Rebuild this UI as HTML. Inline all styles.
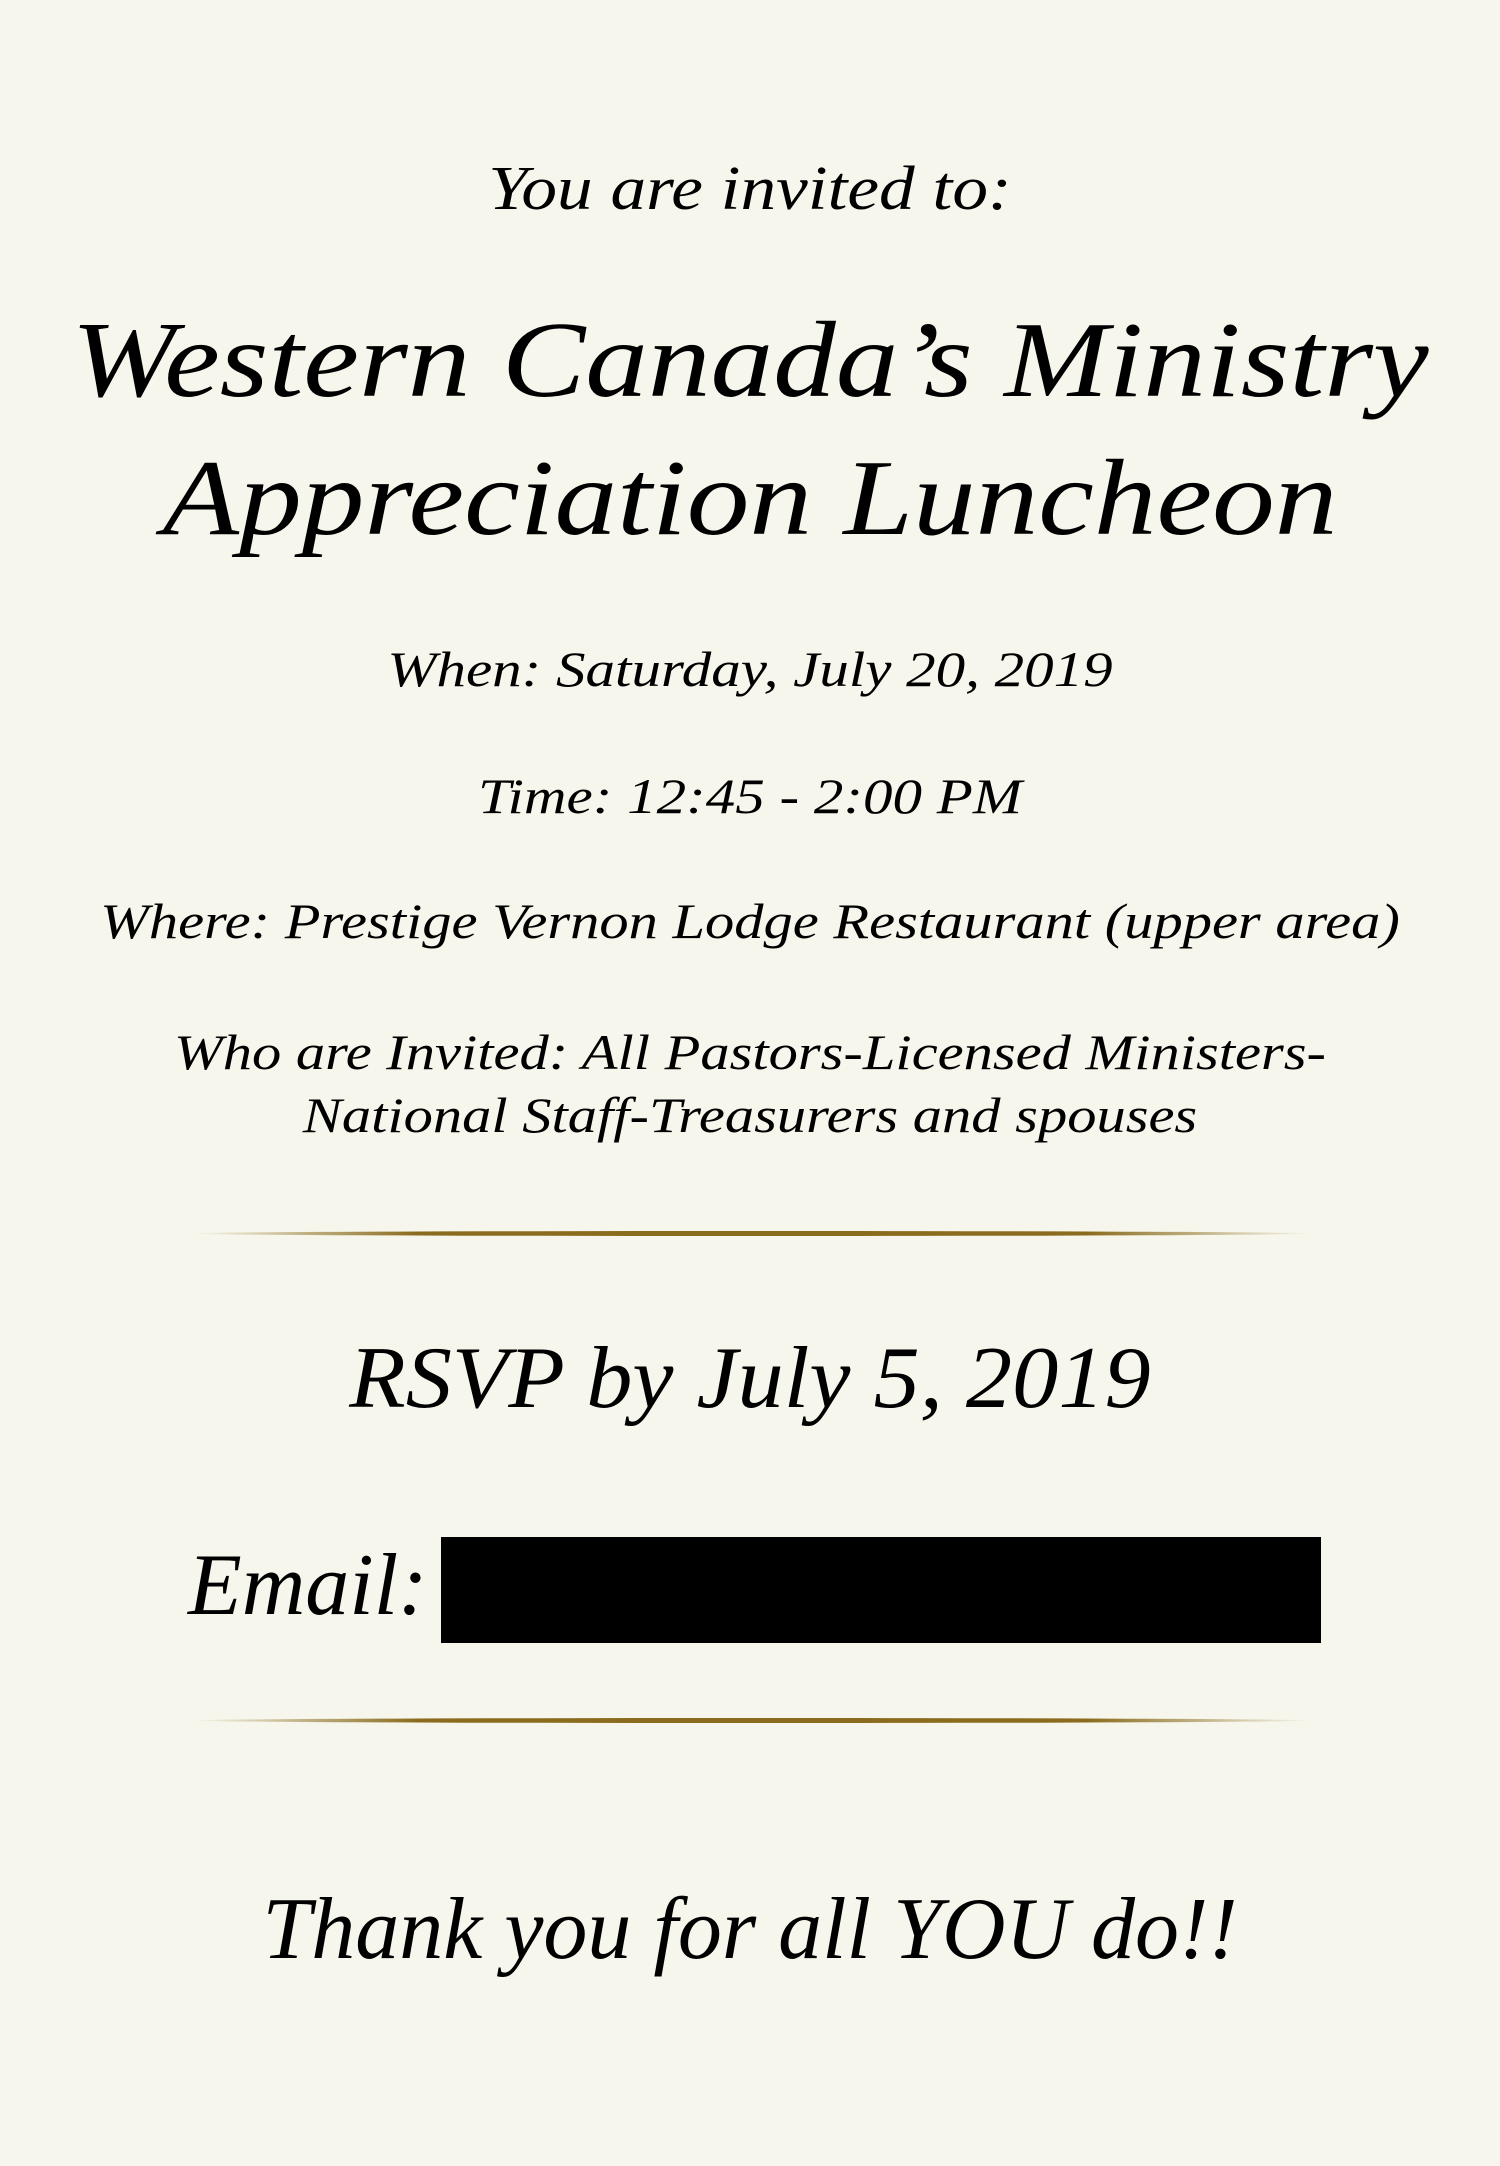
<!DOCTYPE html>
<html><head><meta charset="utf-8"><style>
html,body{margin:0;padding:0}
body{width:1500px;height:2166px;background:#f6f6ec;position:relative;overflow:hidden;font-family:"Liberation Serif",serif;font-style:italic;color:#000}
.t{position:absolute;left:0;width:1500px;text-align:center;white-space:nowrap;transform-origin:750px 50%}
.line{position:absolute;left:193px;width:1117px;height:5px;background:linear-gradient(90deg,rgba(139,108,30,0),#8b6c1e 20%,#8b6c1e 80%,rgba(139,108,30,0));border-radius:50%}
</style></head><body>
<div class="t" style="top:154px;font-size:62px;line-height:70px;transform:scaleX(1.15)">You are invited to:</div>
<div class="t" style="top:300px;font-size:108px;line-height:122px;transform:scaleX(1.16)">Western Canada’s Ministry</div>
<div class="t" style="top:438px;font-size:108px;line-height:122px;transform:scaleX(1.16)">Appreciation Luncheon</div>
<div class="t" style="top:639px;font-size:50px;line-height:60px;transform:scaleX(1.18)">When: Saturday, July 20, 2019</div>
<div class="t" style="top:766px;font-size:50px;line-height:60px;transform:scaleX(1.18)">Time: 12:45 - 2:00 PM</div>
<div class="t" style="top:891px;font-size:50px;line-height:60px;transform:scaleX(1.17)">Where: Prestige Vernon Lodge Restaurant (upper area)</div>
<div class="t" style="top:1021px;font-size:50px;line-height:63px;transform:scaleX(1.17)">Who are Invited: All Pastors-Licensed Ministers-<br>National Staff-Treasurers and spouses</div>
<div class="line" style="top:1231px"></div>
<div class="t" style="top:1329px;font-size:88px;line-height:100px;transform:scaleX(1.05)">RSVP by July 5, 2019</div>
<div style="position:absolute;left:188px;top:1536px;font-size:88px;line-height:100px">Email:</div>
<div style="position:absolute;left:441px;top:1537px;width:880px;height:106px;background:#000"></div>
<div class="line" style="top:1718px"></div>
<div class="t" style="top:1880px;font-size:88px;line-height:100px">Thank you for all YOU do!!</div>
</body></html>
